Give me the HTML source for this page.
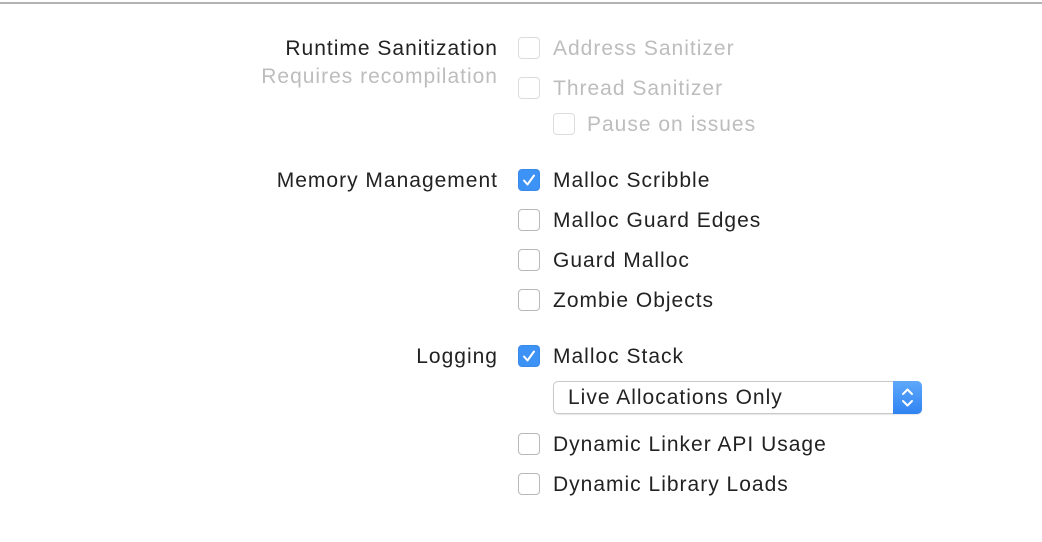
<!DOCTYPE html>
<html><head><style>
body{margin:0;width:1042px;height:542px;background:#fff;position:relative;overflow:hidden;font-family:"Liberation Sans",sans-serif;font-size:21px;letter-spacing:1px;color:#222}
.line{position:absolute;left:0;top:2px;width:1042px;height:2px;background:#b3b3b3}
.t{position:absolute;line-height:24px;white-space:nowrap}
.r{right:545px;text-align:right;margin-right:-1px}
.cb{position:absolute;border:1px solid #b8b8b8;border-radius:4px;background:#fff;box-sizing:border-box;width:22px;height:22px}
.g{color:#bdbdbd}
.on{background:#3d92f5;border-color:#3a8ae8}
.pop{position:absolute;left:553px;top:381px;width:369px;height:33px;border:1px solid #c9c9c9;border-radius:5px;box-sizing:border-box;box-shadow:0 1px 1px rgba(0,0,0,.1)}
.arr{position:absolute;right:-1px;top:-1px;width:29px;height:33px;background:linear-gradient(#5fa8fb,#2f83f2);border-radius:0 5px 5px 0}
</style></head><body>
<div class="line"></div>

<div class="t r" style="top:37px">Runtime Sanitization</div>
<div class="t r g" style="top:65px">Requires recompilation</div>
<div class="cb" style="left:518px;top:37px;border-color:#dcdcdc"></div><div class="t g" style="left:553px;top:37px">Address Sanitizer</div>
<div class="cb" style="left:518px;top:77px;border-color:#dcdcdc"></div><div class="t g" style="left:553px;top:77px">Thread Sanitizer</div>
<div class="cb" style="left:553px;top:113px;border-color:#dcdcdc"></div><div class="t g" style="left:587px;top:113px">Pause on issues</div>

<div class="t r" style="top:169px">Memory Management</div>
<div class="cb on" style="left:518px;top:169px"><svg width="22" height="22" style="position:absolute;left:-1px;top:-1px"><path d="M6 11.5l3.5 4L16 6.5" stroke="#fff" stroke-width="2" fill="none" stroke-linecap="round" stroke-linejoin="round"/></svg></div><div class="t" style="left:553px;top:169px">Malloc Scribble</div>
<div class="cb" style="left:518px;top:209px"></div><div class="t" style="left:553px;top:209px">Malloc Guard Edges</div>
<div class="cb" style="left:518px;top:249px"></div><div class="t" style="left:553px;top:249px">Guard Malloc</div>
<div class="cb" style="left:518px;top:289px"></div><div class="t" style="left:553px;top:289px">Zombie Objects</div>

<div class="t r" style="top:345px">Logging</div>
<div class="cb on" style="left:518px;top:345px"><svg width="22" height="22" style="position:absolute;left:-1px;top:-1px"><path d="M6 11.5l3.5 4L16 6.5" stroke="#fff" stroke-width="2" fill="none" stroke-linecap="round" stroke-linejoin="round"/></svg></div><div class="t" style="left:553px;top:345px">Malloc Stack</div>
<div class="pop"><div class="t" style="left:14px;top:4px">Live Allocations Only</div>
<div class="arr"><svg width="29" height="33"><path d="M10 13l4.5-4.5L19 13M10 20l4.5 4.5L19 20" stroke="#fff" stroke-width="2" fill="none" stroke-linecap="round" stroke-linejoin="round"/></svg></div></div>
<div class="cb" style="left:518px;top:433px"></div><div class="t" style="left:553px;top:433px">Dynamic Linker API Usage</div>
<div class="cb" style="left:518px;top:473px"></div><div class="t" style="left:553px;top:473px">Dynamic Library Loads</div>
</body></html>
